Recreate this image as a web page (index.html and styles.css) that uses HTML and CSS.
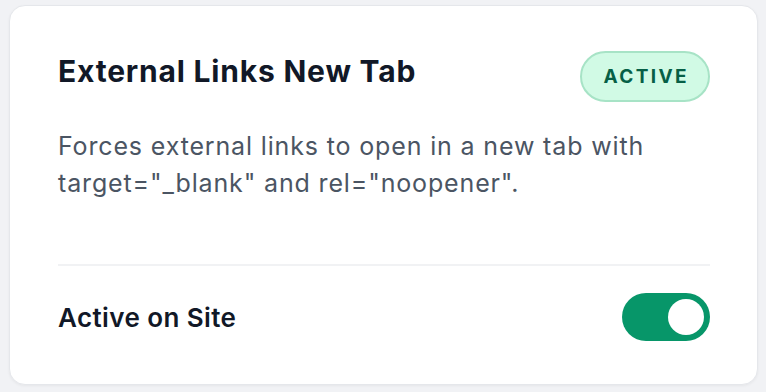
FILE: index.html
```html
<!DOCTYPE html>
<html lang="en">
<head>
    <meta charset="UTF-8" />
    <meta name="viewport" content="width=device-width, initial-scale=1.0" />
    <title>External Links New Tab</title>
    <link rel="stylesheet" href="styles.css">
</head>
<body>
    <div class="card">
        <div class="card-header">
            <h2 class="card-title">External Links New Tab</h2>
            <span class="badge">Active</span>
        </div>

        <p class="card-desc">Forces external links to open in a new tab with target="_blank" and rel="noopener".</p>

        <div class="card-footer">
            <div class="footer-label">Active on Site</div>
            <button class="toggle on" aria-label="Toggle"><span class="knob"></span></button>
        </div>
    </div>
</body>
</html>
```

FILE: styles.css
```css
body {
    font-family: Inter, "Noto Sans", Arial, sans-serif;
    background-color: #f1f2f5;
    margin: 0;
    padding: 5px 8px 7px 9px;
}

.card {
    background: white;
    border: 1px solid #e5e7eb;
    border-radius: 16px;
    box-shadow: 0 1px 3px rgba(0,0,0,0.05);
    padding: 45px 47px 43px 48px;
    height: 380px;
    box-sizing: border-box;
}

.card-header {
    display: flex;
    justify-content: space-between;
    align-items: flex-start;
}

.card-title {
    margin: 2px 0 0;
    font-size: 30px;
    line-height: 36px;
    font-weight: 700;
    color: #111827;
    letter-spacing: 0.8px;
}

.badge {
    background-color: #d1fae5;
    border: 2px solid #a7e3c6;
    color: #065f46;
    font-size: 19px;
    font-weight: 700;
    text-transform: uppercase;
    letter-spacing: 2.4px;
    padding: 10px 19px 10px 21px;
    border-radius: 999px;
    line-height: 27px;
}

.card-desc {
    margin: 26px 0 0;
    font-size: 25px;
    line-height: 37px;
    color: #4b5563;
    letter-spacing: 0.85px;
    max-width: 620px;
}

.card-footer {
    margin-top: 62px;
    padding-top: 27px;
    border-top: 2px solid #f1f2f4;
    display: flex;
    justify-content: space-between;
    align-items: center;
}

.footer-label {
    font-size: 26px;
    font-weight: 600;
    color: #111827;
    letter-spacing: 0.4px;
}

.toggle {
    width: 88px;
    height: 48px;
    border: none;
    border-radius: 24px;
    background-color: #e5e7eb;
    padding: 6px;
    display: flex;
    cursor: pointer;
}

.toggle.on {
    background-color: #079669;
    justify-content: flex-end;
}

.knob {
    width: 36px;
    height: 36px;
    border-radius: 50%;
    background: white;
}
```
